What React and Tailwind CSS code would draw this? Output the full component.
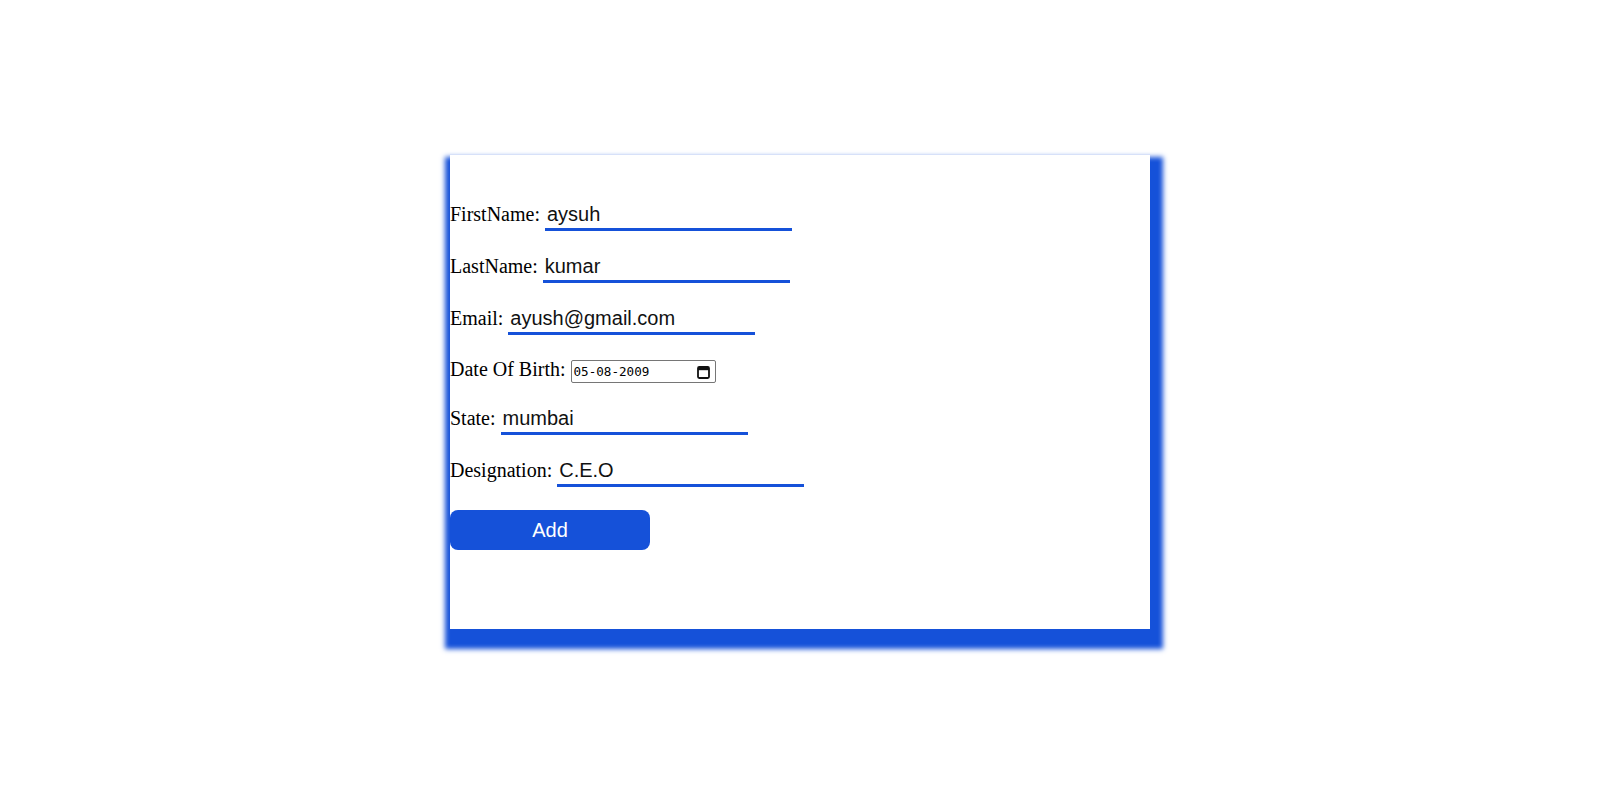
import { useEffect, useRef } from "react";

function Field({ label, value, inputRef }) {
    return (
        <div className="flex items-baseline">
            <label className="mr-[5px] font-['Liberation_Serif',serif] text-[20px] leading-[23px] text-black">
                {label}
            </label>
            <input
                ref={inputRef}
                type="text"
                defaultValue={value}
                className="w-[247px] border-0 border-b-[3px] border-[#1551d9] bg-white px-[2px] pt-px pb-[2px] font-['Liberation_Sans',sans-serif] text-[20px] leading-[23px] text-[#111] outline-none"
            />
        </div>
    );
}

function DateField() {
    return (
        <div className="flex items-baseline">
            <label className="mr-[5px] font-['Liberation_Serif',serif] text-[20px] leading-[23px] text-black">
                Date Of Birth:
            </label>
            <div className="inline-flex h-[23px] w-[145px] items-center justify-between rounded-[2px] border border-[#767676] pl-[2px] pr-[5px]">
                <span className="font-['DejaVu_Sans_Mono',monospace] text-[12.6px] leading-[15px] text-black">
                    05-08-2009
                </span>
                <svg width="13" height="14" viewBox="0 0 13 14">
                    <rect x="1" y="2" width="11" height="11" rx="1.2" fill="none" stroke="#111" strokeWidth="1.8" />
                    <rect x="1" y="2" width="11" height="3.2" fill="#111" />
                </svg>
            </div>
        </div>
    );
}

export default function App() {
    const lastRef = useRef(null);

    useEffect(() => {
        const el = lastRef.current;
        if (el) {
            el.focus();
            el.setSelectionRange(el.value.length, el.value.length);
        }
    }, []);

    return (
        <div className="flex min-h-screen items-center justify-center bg-white pb-[2px]">
            <div className="h-[474px] w-[700px] bg-white pt-[47px] shadow-[4px_11px_5px_9px_#1551d9]">
                <form className="flex flex-col items-start gap-[23px]" onSubmit={(e) => e.preventDefault()}>
                    <Field label="FirstName:" value="aysuh" />
                    <Field label="LastName:" value="kumar" />
                    <Field label="Email:" value="ayush@gmail.com" />
                    <DateField />
                    <Field label="State:" value="mumbai" />
                    <Field label="Designation:" value="C.E.O" inputRef={lastRef} />
                    <button
                        type="submit"
                        className="h-[40px] w-[200px] rounded-[8px] bg-[#1551d9] font-['Liberation_Sans',sans-serif] text-[20px] text-white"
                    >
                        Add
                    </button>
                </form>
            </div>
        </div>
    );
}
